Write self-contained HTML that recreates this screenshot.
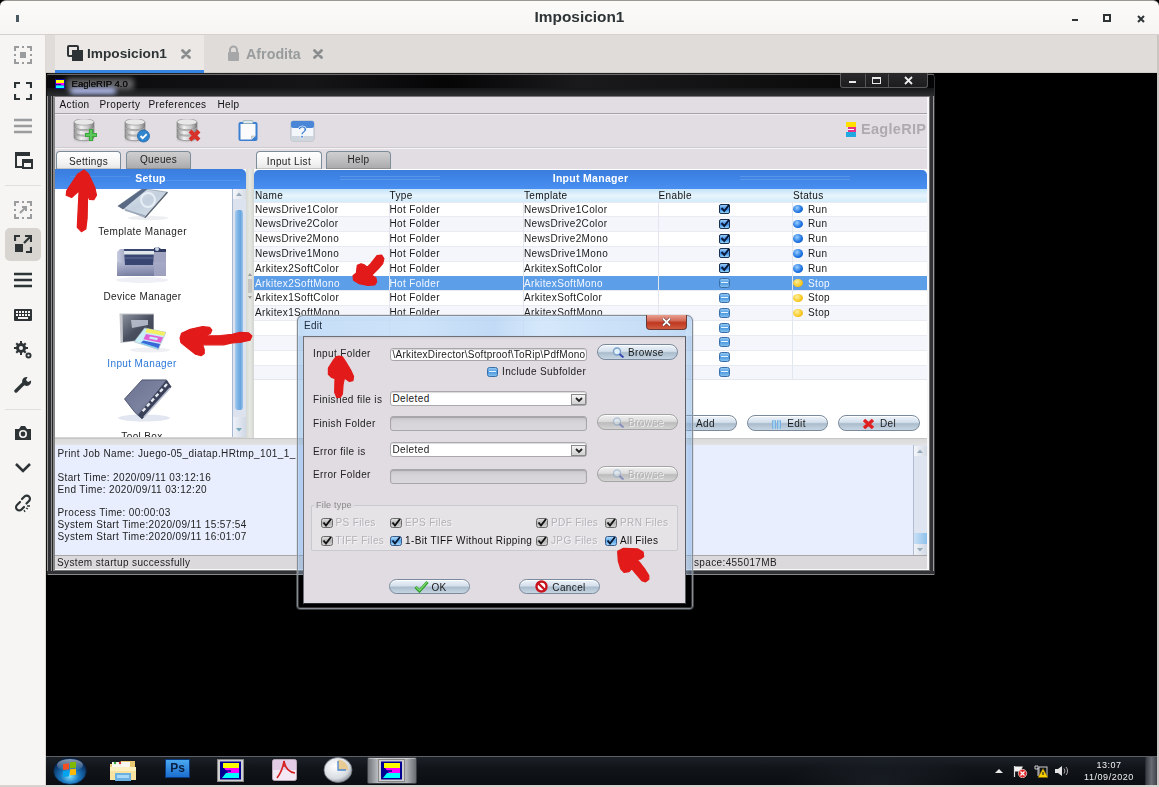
<!DOCTYPE html>
<html><head><meta charset="utf-8">
<style>
*{box-sizing:border-box;margin:0;padding:0}
html,body{width:1159px;height:787px;overflow:hidden;background:#000;font-family:"Liberation Sans",sans-serif;}
.a{position:absolute}
#titlebar{left:0;top:0;width:1159px;height:35px;background:linear-gradient(#fbfbfa,#f6f5f3);border-top:1px solid #9c9893;border-bottom:1px solid #d6d1cc;border-radius:6px 6px 0 0}
#sidebar{left:0;top:35px;width:46px;height:752px;background:#f6f5f4;border-right:1px solid #dcd8d4}
#tabbar{left:46px;top:35px;width:1111px;height:38px;background:#e0dcd9;border-bottom:1px solid #d0ccc8}
#rightedge{left:1157px;top:35px;width:2px;height:752px;background:#c9c5c1}
#bottomedge{left:0;top:785px;width:1159px;height:2px;background:#d6d2ce}
.sico{position:absolute;left:13px;width:20px;height:20px}
.t{position:absolute;white-space:nowrap;font-size:10px;letter-spacing:0.37px;color:#111;line-height:12px}
</style></head><body>

<!-- desktop chrome -->
<div id="titlebar" class="a">
  <div class="a" style="left:0;top:0;width:1159px;text-align:center;top:7.2px;font-weight:bold;font-size:15.4px;color:#2e3436;letter-spacing:0">Imposicion1</div>
  <div class="a" style="left:16px;top:14px;width:3px;height:7px;background:#4a5a60"></div>
  <div class="a" style="left:1072px;top:18px;width:6px;height:2px;background:#2e3436"></div>
  <svg class="a" style="left:1103px;top:13px" width="8" height="8"><rect x="1" y="1" width="6" height="6" fill="none" stroke="#2e3436" stroke-width="2"/></svg>
  <svg class="a" style="left:1137px;top:14px" width="8" height="8"><path d="M1 1L7 7M7 1L1 7" stroke="#2e3436" stroke-width="2"/></svg>
</div>
<div id="sidebar" class="a"></div>
<div id="tabbar" class="a">
  <div class="a" style="left:9px;top:0;width:149px;height:38px;background:#ebe8e5"></div>
  <div class="a" style="left:9px;top:35px;width:149px;height:3px;background:#3584e4"></div>
  <svg class="a" style="left:21px;top:10px" width="17" height="17"><rect x="1" y="1" width="10" height="10" rx="1" fill="none" stroke="#2e3436" stroke-width="2"/><rect x="5" y="5" width="11" height="11" fill="#2e3436"/></svg>
  <div class="a" style="left:41px;top:11px;font-weight:bold;font-size:13.7px;color:#2e3436">Imposicion1</div>
  <svg class="a" style="left:135px;top:14px" width="10" height="10"><path d="M1.5 1.5L8.5 8.5M8.5 1.5L1.5 8.5" stroke="#8a8d8e" stroke-width="2.8" stroke-linecap="round"/></svg>
  <svg class="a" style="left:181px;top:10px" width="13" height="16"><path d="M3 7V5a3.5 3.5 0 0 1 7 0v2" fill="none" stroke="#a5a7a8" stroke-width="2"/><rect x="1" y="7" width="11" height="9" rx="1" fill="#a5a7a8"/></svg>
  <div class="a" style="left:200px;top:10.6px;font-weight:bold;font-size:14.3px;color:#999c9d">Afrodita</div>
  <svg class="a" style="left:267px;top:14px" width="10" height="10"><path d="M1.5 1.5L8.5 8.5M8.5 1.5L1.5 8.5" stroke="#8a8d8e" stroke-width="2.8" stroke-linecap="round"/></svg>
</div>
<div id="rightedge" class="a"></div>
<div id="bottomedge" class="a"></div>

<!-- SIDEBAR ICONS -->
<div id="sideicons">
 <svg class="a" style="left:14px;top:46px" width="18" height="18"><g fill="none" stroke="#9a9c9d" stroke-width="2"><path d="M1 5V1h4M13 1h4v4M17 13v4h-4M5 17H1v-4"/></g><rect x="6" y="6" width="6" height="6" fill="#9a9c9d"/><path d="M8 1h2M8 17h2M1 8v2M17 8v2" stroke="#9a9c9d" stroke-width="2"/></svg>
 <svg class="a" style="left:14px;top:82px" width="18" height="18"><g fill="none" stroke="#2e3436" stroke-width="2.2"><path d="M1 6V1h5M12 1h5v5M17 12v5h-5M6 17H1v-5"/></g></svg>
 <svg class="a" style="left:13px;top:118px" width="20" height="16"><g stroke="#9a9c9d" stroke-width="2.4"><path d="M1 2h18M1 8h18M1 14h18"/></g></svg>
 <svg class="a" style="left:14px;top:151px" width="19" height="18"><path d="M1 1h15v2H3v12h5v2H1z" fill="#2e3436"/><rect x="1" y="1" width="15" height="4" fill="#2e3436"/><rect x="9" y="9" width="9" height="8" fill="none" stroke="#2e3436" stroke-width="2"/><rect x="9" y="9" width="9" height="3" fill="#2e3436"/></svg>
 <div class="a" style="left:5px;top:185px;width:36px;height:1px;background:#e2dfdb"></div>
 <svg class="a" style="left:14px;top:201px" width="18" height="18"><g fill="none" stroke="#9a9c9d" stroke-width="2"><path d="M1 5V1h4M13 1h4v4M17 13v4h-4M5 17H1v-4"/><path d="M6 12l6-6M8 6h4v4" /></g><path d="M8 1h2M8 17h2M1 8v2M17 8v2" stroke="#9a9c9d" stroke-width="2"/></svg>
 <div class="a" style="left:5px;top:228px;width:36px;height:33px;background:#d8d4d0;border-radius:5px"></div>
 <svg class="a" style="left:14px;top:235px" width="18" height="18"><g fill="none" stroke="#2e3436" stroke-width="2.2"><path d="M1 6V1h5M17 12v5h-5"/><path d="M10 8l6-6M11 1h6v6"/></g><rect x="1" y="9" width="8" height="8" fill="#2e3436"/></svg>
 <svg class="a" style="left:13px;top:272px" width="20" height="16"><g stroke="#2e3436" stroke-width="2.4"><path d="M1 2h18M1 8h18M1 14h18"/></g></svg>
 <svg class="a" style="left:14px;top:309px" width="18" height="12"><rect x="0" y="0" width="18" height="12" rx="1" fill="#2e3436"/><g fill="#f6f5f4"><rect x="2" y="2" width="2" height="2"/><rect x="5" y="2" width="2" height="2"/><rect x="8" y="2" width="2" height="2"/><rect x="11" y="2" width="2" height="2"/><rect x="14" y="2" width="2" height="2"/><rect x="2" y="5" width="2" height="2"/><rect x="5" y="5" width="2" height="2"/><rect x="8" y="5" width="2" height="2"/><rect x="11" y="5" width="2" height="2"/><rect x="14" y="5" width="2" height="2"/><rect x="4" y="8" width="10" height="2"/></g></svg>
 <svg class="a" style="left:14px;top:341px" width="18" height="18"><g fill="#2e3436"><circle cx="7" cy="7" r="5"/><path d="M6 0h2v3H6zM6 11h2v3H6zM0 6h3v2H0zM11 6h3v2h-3zM1.5 3L3 1.5 5 3.5 3.5 5zM9 10.5l1.5-1.5 2 2-1.5 1.5zM1.5 11l2-2 1.5 1.5-2 2zM9 3.5l2-2 1.5 1.5-2 2z"/><circle cx="14.5" cy="14.5" r="3"/></g><circle cx="7" cy="7" r="2" fill="#f6f5f4"/><circle cx="14.5" cy="14.5" r="1.1" fill="#f6f5f4"/></svg>
 <svg class="a" style="left:14px;top:376px" width="18" height="18"><path d="M2 15l7-7" stroke="#2e3436" stroke-width="3.4" stroke-linecap="round"/><path d="M13.5 1a4.5 4.5 0 1 0 3.5 3.5l-3 1.5-2-2 1.5-3z" fill="#2e3436"/></svg>
 <div class="a" style="left:5px;top:409px;width:36px;height:1px;background:#e2dfdb"></div>
 <svg class="a" style="left:14px;top:425px" width="18" height="16"><path d="M1 4h4l2-3h4l2 3h4v11H1z" fill="#2e3436"/><circle cx="9" cy="9" r="4" fill="#f6f5f4"/><circle cx="9" cy="9" r="2.4" fill="#2e3436"/></svg>
 <svg class="a" style="left:14px;top:462px" width="18" height="12"><path d="M2 2l7 7 7-7" fill="none" stroke="#2e3436" stroke-width="2.6"/></svg>
 <svg class="a" style="left:14px;top:494px" width="18" height="19"><g fill="none" stroke="#2e3436" stroke-width="2.2" stroke-linecap="round"><path d="M8 5l2.5-2.5a3 3 0 0 1 4.5 4.5L12.5 9.5"/><path d="M6 8L3 11a3 3 0 0 0 4.5 4.5L10 13"/></g><path d="M12 14l2 1M13 12l3 0M10 16l1 2" stroke="#2e3436" stroke-width="1.3"/></svg>
</div>

<!-- TASKBAR -->
<div class="a" style="left:46px;top:756px;width:1111px;height:29px;background:linear-gradient(#1c2128 0,#11151a 40%,#0a0d11 100%);border-top:1px solid #5e6268"></div>
<div class="a" style="left:780px;top:757px;width:200px;height:28px;background:radial-gradient(ellipse at 50% 100%,rgba(60,70,80,.25),transparent 70%)"></div>
<svg class="a" style="left:52px;top:757px" width="36" height="28" viewBox="0 0 36 28"><defs><radialGradient id="orb" cx="50%" cy="70%" r="60%"><stop offset="0" stop-color="#7fe0ff"/><stop offset=".45" stop-color="#1a78c0"/><stop offset="1" stop-color="#0a2a58"/></radialGradient><linearGradient id="orbh" x1="0" y1="0" x2="0" y2="1"><stop offset="0" stop-color="#fff" stop-opacity=".55"/><stop offset="1" stop-color="#fff" stop-opacity="0"/></linearGradient></defs><ellipse cx="18" cy="14" rx="16.5" ry="13.5" fill="url(#orb)" stroke="#0a1a30" stroke-width=".8"/><ellipse cx="18" cy="8" rx="13" ry="6" fill="url(#orbh)"/><g transform="translate(11,6) skewY(-6)"><rect x="0" y="1" width="6" height="6" fill="#f25022"/><rect x="7" y="0" width="6" height="6" fill="#7fba00"/><rect x="0" y="8" width="6" height="6" fill="#00a4ef"/><rect x="7" y="7" width="6" height="6" fill="#ffb900"/></g></svg>
<svg class="a" style="left:108px;top:759px" width="30" height="24"><path d="M2 5h9l2-3h14v19H2z" fill="#e8c870"/><rect x="4" y="3" width="18" height="6" fill="#f8f8f0"/><circle cx="7" cy="4" r="1.2" fill="#3a3"/><circle cx="12" cy="4" r="1.2" fill="#c33"/><path d="M2 8h26v13H2z" fill="#f8e4a0"/><path d="M2 8h26v4H2z" fill="#fcf0c0"/><path d="M7 14h16v8H7z" fill="#6ab0e0"/><path d="M9 16h12v3H9z" fill="#a8d8f8"/></svg>
<div class="a" style="left:165px;top:759px;width:25px;height:19px;background:linear-gradient(#4aa8f0,#1c6ed0);border:1px solid #0a3a80"></div>
<div class="a" style="left:165px;top:761px;width:25px;text-align:center;font-weight:bold;font-size:12px;color:#0a2040;line-height:14px">Ps</div>
<svg class="a" style="left:217px;top:759px" width="27" height="23"><rect x=".5" y=".5" width="26" height="22" fill="#d0d0d0" stroke="#888"/><rect x="3" y="2.5" width="21" height="18" fill="#000090"/><rect x="6" y="4" width="16" height="5" fill="#ffff00"/><path d="M7 9h15v5H11z" fill="#ff00ff"/><path d="M5 19l4-5h13v5z" fill="#00ffff"/><path d="M4 12h10" stroke="#000090" stroke-width="1.5"/></svg>
<svg class="a" style="left:272px;top:759px" width="25" height="22"><rect x=".5" y=".5" width="24" height="21" rx="2" fill="#f4e8f4" stroke="#b8a8b8"/><rect x="1" y="1" width="23" height="10" fill="#dcc0e0" opacity=".7"/><path d="M5 19c3-4 6-10 7-17 1 6 4 11 11 12" fill="none" stroke="#d42020" stroke-width="1.6"/><path d="M12 2v6" stroke="#d42020" stroke-width="1.4"/></svg>
<svg class="a" style="left:323px;top:757px" width="30" height="26"><defs><radialGradient id="clk" cx="40%" cy="35%" r="70%"><stop offset="0" stop-color="#ffffff"/><stop offset=".7" stop-color="#d8dde2"/><stop offset="1" stop-color="#8a9098"/></radialGradient></defs><ellipse cx="15" cy="13" rx="14" ry="12.5" fill="url(#clk)" stroke="#6a7078" stroke-width=".8"/><path d="M15 13V2.5A11 10.5 0 0 1 25.5 13z" fill="#e8c888" opacity=".9"/><path d="M15 4v9h8" fill="none" stroke="#4a88d0" stroke-width="1.3"/></svg>
<div class="a" style="left:367px;top:757px;width:50px;height:27px;border-radius:2px;background:linear-gradient(90deg,#707478 0,#b8bcc0 20%,#9ca0a4 50%,#b0b4b8 80%,#6a6e72 100%);border:1px solid #3a3e42;box-shadow:inset 0 1px 0 rgba(255,255,255,.4)"></div>
<svg class="a" style="left:378px;top:759px" width="27" height="23"><rect x=".5" y=".5" width="26" height="22" fill="#d0d0d0" stroke="#888"/><rect x="3" y="2.5" width="21" height="18" fill="#000090"/><rect x="6" y="4" width="16" height="5" fill="#ffff00"/><path d="M7 9h15v5H11z" fill="#ff00ff"/><path d="M5 19l4-5h13v5z" fill="#00ffff"/><path d="M4 12h10" stroke="#000090" stroke-width="1.5"/></svg>
<svg class="a" style="left:995px;top:768px" width="8" height="5"><path d="M0 5l4-4 4 4z" fill="#e8e8e8"/></svg>
<svg class="a" style="left:1013px;top:765px" width="15" height="13"><path d="M1.5 1v11" stroke="#ddd" stroke-width="1.2"/><path d="M2 1.5h8l-1.5 2.5L10 6.5H2z" fill="#f4f4f4"/><circle cx="9.5" cy="8.5" r="4.2" fill="#e02828" stroke="#fff" stroke-width=".6"/><path d="M7.5 6.5l4 4M11.5 6.5l-4 4" stroke="#fff" stroke-width="1.2"/></svg>
<svg class="a" style="left:1034px;top:765px" width="14" height="13"><path d="M1 1h3v3H1zM4 3v8" stroke="#ccc" fill="none" stroke-width="1"/><rect x="5" y="2" width="8" height="9" fill="none" stroke="#ccc" stroke-width="1"/><path d="M4 12.5l5-9 5 9z" fill="#f8d000" stroke="#806000" stroke-width=".6"/><path d="M9 7v3" stroke="#222" stroke-width="1.2"/></svg>
<svg class="a" style="left:1054px;top:765px" width="14" height="12"><path d="M1 4h3l4-3v10L4 8H1z" fill="#e4e4e4"/><path d="M10 3.5a4 4 0 0 1 0 5M12 2a6 6 0 0 1 0 8" fill="none" stroke="#aaa" stroke-width="1"/></svg>
<div class="a" style="left:1080px;top:759.5px;width:58px;text-align:center;font-size:9px;letter-spacing:0.5px;color:#f0f0f0;line-height:11px">13:07</div>
<div class="a" style="left:1080px;top:772px;width:58px;text-align:center;font-size:9px;letter-spacing:0.55px;color:#f0f0f0;line-height:11px">11/09/2020</div>
<div class="a" style="left:1145px;top:757px;width:12px;height:28px;background:linear-gradient(90deg,#3a3e44,#6a6e74 50%,#3e4248);border-left:1px solid #2a2e34"></div>
<!-- EAGLERIP WINDOW -->
<div class="a" style="left:46px;top:73px;width:889px;height:502px;background:#303236;border-radius:5px 5px 0 0;box-shadow:inset 1px 0 0 #111,inset 0 1px 0 #222"></div>
<div class="a" style="left:47px;top:96px;width:1px;height:475px;background:#9a9a9a"></div>
<div class="a" style="left:51px;top:96px;width:1px;height:475px;background:#8e8e8e"></div>
<div class="a" style="left:52px;top:96px;width:1px;height:475px;background:#262626"></div>
<div class="a" style="left:53px;top:96px;width:2px;height:475px;background:#858585"></div>
<div class="a" style="left:929px;top:96px;width:1px;height:475px;background:#777"></div>
<div class="a" style="left:933px;top:80px;width:1px;height:491px;background:#9a9a9a"></div>
<div class="a" style="left:55px;top:570px;width:874px;height:1px;background:#777"></div>
<div class="a" style="left:48px;top:574px;width:886px;height:1px;background:#8a8a8a"></div>
<div class="a" style="left:47px;top:74px;width:887px;height:22px;background:linear-gradient(90deg,#0a0a0c 0,#151517 30%,#050506 45%,#1a1a1c 60%,#050505 100%);border-radius:4px 4px 0 0"></div>
<div class="a" style="left:47px;top:74px;width:887px;height:1px;background:#6a6a6a"></div>
<div class="a" style="left:47px;top:88px;width:887px;height:8px;background:linear-gradient(#151618,#2c2e30)"></div>
<div class="a" style="left:66px;top:78px;width:68px;height:12px;background:#5e5e60;filter:blur(2.5px);border-radius:4px"></div>
<div class="a" style="left:70px;top:88px;width:46px;height:6px;background:#b8c4f8;filter:blur(2.5px);border-radius:3px"></div>
<svg class="a" style="left:55px;top:79px" width="10" height="10"><rect width="10" height="10" fill="#1010a0"/><rect x="1" y="1" width="8" height="3" fill="#ffff00"/><rect x="1" y="4" width="8" height="2.5" fill="#ff00ff"/><rect x="1" y="6.5" width="8" height="2.5" fill="#00ffff"/><path d="M1 5.5h5" stroke="#1010a0" stroke-width="1"/></svg>
<div class="a t" style="left:71.5px;top:77.5px;color:#111;font-size:9.6px;letter-spacing:0px;text-shadow:0 0 .6px #000">EagleRIP 4.0</div>
<div class="a" style="left:840px;top:73px;width:88px;height:15px;border:1px solid #5a5a5a;border-top:none;border-radius:0 0 3px 3px;background:linear-gradient(#2a2a2c,#1c1c1e)"></div>
<div class="a" style="left:865px;top:74px;width:1px;height:13px;background:#555"></div>
<div class="a" style="left:888px;top:74px;width:1px;height:13px;background:#555"></div>
<div class="a" style="left:849px;top:81px;width:7px;height:2px;background:#e8e8e8"></div>
<div class="a" style="left:872px;top:77px;width:9px;height:7px;border:1.5px solid #e8e8e8;border-top-width:2px"></div>
<svg class="a" style="left:904px;top:76px" width="9" height="9"><path d="M1 1L8 8M8 1L1 8" stroke="#eee" stroke-width="1.8"/></svg>
<div class="a" style="left:55px;top:96px;width:874px;height:474px;background:#e1dde2;border-top:1px solid #7a767a"></div>
<div class="a" style="left:927px;top:97px;width:2px;height:473px;background:#f7f6f8"></div>
<div class="a t" style="left:59.5px;top:99px">Action</div>
<div class="a t" style="left:99.5px;top:99px">Property</div>
<div class="a t" style="left:148.5px;top:99px">Preferences</div>
<div class="a t" style="left:217.5px;top:99px">Help</div>
<div class="a" style="left:55px;top:113px;width:872px;height:1px;background:#a6a2a6"></div>
<div class="a" style="left:55px;top:114px;width:872px;height:1px;background:#f0eef1"></div>
<svg class="a" style="left:72px;top:119px" width="28" height="24" viewBox="0 0 28 24"><defs><linearGradient id="dbg" x1="0" x2="1"><stop offset="0" stop-color="#8d8d8d"/><stop offset=".35" stop-color="#f2f2f2"/><stop offset=".7" stop-color="#c8c8c8"/><stop offset="1" stop-color="#7a7a7a"/></linearGradient></defs><ellipse cx="12" cy="21" rx="11" ry="2.5" fill="#cfcbd0" opacity=".7"/><path d="M2 14v4.5a10 3.2 0 0 0 20 0V14" fill="url(#dbg)" stroke="#777" stroke-width=".6"/><ellipse cx="12" cy="14" rx="10" ry="3.2" fill="#e8e8e8" stroke="#8a8a8a" stroke-width=".6"/><path d="M2 8.5v4.5a10 3.2 0 0 0 20 0V8.5" fill="url(#dbg)" stroke="#777" stroke-width=".6"/><ellipse cx="12" cy="8.5" rx="10" ry="3.2" fill="#e8e8e8" stroke="#8a8a8a" stroke-width=".6"/><path d="M2 3v4.5a10 3.2 0 0 0 20 0V3" fill="url(#dbg)" stroke="#777" stroke-width=".6"/><ellipse cx="12" cy="3" rx="10" ry="3.2" fill="#e8e8e8" stroke="#8a8a8a" stroke-width=".6"/><path d="M19 10v12M13 16h12" stroke="#3aa83a" stroke-width="4.2"/><path d="M19 11v10M14 16h10" stroke="#5cc85c" stroke-width="2"/></svg>
<svg class="a" style="left:123px;top:119px" width="28" height="24" viewBox="0 0 28 24"><defs><linearGradient id="dbg" x1="0" x2="1"><stop offset="0" stop-color="#8d8d8d"/><stop offset=".35" stop-color="#f2f2f2"/><stop offset=".7" stop-color="#c8c8c8"/><stop offset="1" stop-color="#7a7a7a"/></linearGradient></defs><ellipse cx="12" cy="21" rx="11" ry="2.5" fill="#cfcbd0" opacity=".7"/><path d="M2 14v4.5a10 3.2 0 0 0 20 0V14" fill="url(#dbg)" stroke="#777" stroke-width=".6"/><ellipse cx="12" cy="14" rx="10" ry="3.2" fill="#e8e8e8" stroke="#8a8a8a" stroke-width=".6"/><path d="M2 8.5v4.5a10 3.2 0 0 0 20 0V8.5" fill="url(#dbg)" stroke="#777" stroke-width=".6"/><ellipse cx="12" cy="8.5" rx="10" ry="3.2" fill="#e8e8e8" stroke="#8a8a8a" stroke-width=".6"/><path d="M2 3v4.5a10 3.2 0 0 0 20 0V3" fill="url(#dbg)" stroke="#777" stroke-width=".6"/><ellipse cx="12" cy="3" rx="10" ry="3.2" fill="#e8e8e8" stroke="#8a8a8a" stroke-width=".6"/><circle cx="20.5" cy="17" r="6" fill="#2f86cf" stroke="#1e63a8" stroke-width=".8"/><path d="M17.5 17l2.2 2.2 4-4" fill="none" stroke="#fff" stroke-width="1.8"/></svg>
<svg class="a" style="left:175px;top:119px" width="28" height="24" viewBox="0 0 28 24"><defs><linearGradient id="dbg" x1="0" x2="1"><stop offset="0" stop-color="#8d8d8d"/><stop offset=".35" stop-color="#f2f2f2"/><stop offset=".7" stop-color="#c8c8c8"/><stop offset="1" stop-color="#7a7a7a"/></linearGradient></defs><ellipse cx="12" cy="21" rx="11" ry="2.5" fill="#cfcbd0" opacity=".7"/><path d="M2 14v4.5a10 3.2 0 0 0 20 0V14" fill="url(#dbg)" stroke="#777" stroke-width=".6"/><ellipse cx="12" cy="14" rx="10" ry="3.2" fill="#e8e8e8" stroke="#8a8a8a" stroke-width=".6"/><path d="M2 8.5v4.5a10 3.2 0 0 0 20 0V8.5" fill="url(#dbg)" stroke="#777" stroke-width=".6"/><ellipse cx="12" cy="8.5" rx="10" ry="3.2" fill="#e8e8e8" stroke="#8a8a8a" stroke-width=".6"/><path d="M2 3v4.5a10 3.2 0 0 0 20 0V3" fill="url(#dbg)" stroke="#777" stroke-width=".6"/><ellipse cx="12" cy="3" rx="10" ry="3.2" fill="#e8e8e8" stroke="#8a8a8a" stroke-width=".6"/><path d="M15 12l9 9M24 12l-9 9" stroke="#d8332a" stroke-width="4"/></svg>
<svg class="a" style="left:237px;top:120px" width="22" height="23"><rect x="1.5" y="2" width="19" height="19" rx="2" fill="#3c7fd0"/><path d="M3.5 4h15v12l-4 3.5h-11z" fill="#fbfbfb"/><path d="M14.5 19.5v-3.5h4" fill="#d8d8d8" stroke="#9aa" stroke-width=".5"/><rect x="6" y="0.5" width="10" height="3" rx="1" fill="#dfe7ee" stroke="#8aa" stroke-width=".6"/></svg>
<svg class="a" style="left:290px;top:120px" width="25" height="23"><rect x="1" y="1" width="23" height="20" rx="2" fill="#f3f6fa" stroke="#a5b0bb" stroke-width=".8"/><rect x="1" y="1" width="23" height="7" rx="2" fill="#4a86d8"/><path d="M1 16h23v3a2 2 0 0 1-2 2H3a2 2 0 0 1-2-2z" fill="#cfd5dc"/><text x="12.5" y="18" text-anchor="middle" font-family="Liberation Sans" font-weight="bold" font-size="16" fill="#3a7bd5" stroke="#fff" stroke-width=".6">?</text></svg>
<svg class="a" style="left:845px;top:122px" width="12" height="16"><rect x="1" y="0" width="10" height="5" fill="#ffe000"/><rect x="3" y="5" width="8" height="5" fill="#e8308a"/><rect x="1" y="10" width="10" height="5" fill="#20a8e0"/><path d="M3 7.5h6" stroke="#fff" stroke-width="1"/></svg>
<div class="a" style="left:861px;top:121px;font-size:14.5px;font-weight:bold;color:#adabae;letter-spacing:0.3px;line-height:17px">EagleRIP</div>
<div class="a" style="left:55px;top:147px;width:872px;height:1px;background:#cfccd0"></div>
<div class="a" style="left:55px;top:148px;width:872px;height:1px;background:#f4f3f5"></div>
<div class="a" style="left:56px;top:151px;width:65px;height:18px;background:linear-gradient(#ffffff,#f4f4f4 60%,#e6e6e6);border:1px solid #7d8c99;border-bottom:none;border-radius:4px 4px 0 0;box-shadow:inset 0 -1px 0 rgba(0,0,0,.15)"></div><div class="a t" style="left:56px;top:155.5px;width:65px;text-align:center;color:#222">Settings</div>
<div class="a" style="left:126px;top:151px;width:65px;height:18px;background:linear-gradient(#cfcfd0,#b9b9bb 60%,#a9a9ab);border:1px solid #7d8c99;border-bottom:none;border-radius:4px 4px 0 0;box-shadow:inset 0 -1px 0 rgba(0,0,0,.15)"></div><div class="a t" style="left:126px;top:154px;width:65px;text-align:center;color:#222">Queues</div>
<div class="a" style="left:256px;top:151px;width:66px;height:18px;background:linear-gradient(#ffffff,#f4f4f4 60%,#e6e6e6);border:1px solid #7d8c99;border-bottom:none;border-radius:4px 4px 0 0;box-shadow:inset 0 -1px 0 rgba(0,0,0,.15)"></div><div class="a t" style="left:256px;top:155.5px;width:66px;text-align:center;color:#222">Input List</div>
<div class="a" style="left:326px;top:151px;width:65px;height:18px;background:linear-gradient(#cfcfd0,#b9b9bb 60%,#a9a9ab);border:1px solid #7d8c99;border-bottom:none;border-radius:4px 4px 0 0;box-shadow:inset 0 -1px 0 rgba(0,0,0,.15)"></div><div class="a t" style="left:326px;top:154px;width:65px;text-align:center;color:#222">Help</div>
<div class="a" style="left:55px;top:169px;width:191px;height:269px;background:#fff"></div>
<div class="a" style="left:55px;top:169px;width:191px;height:20px;background:linear-gradient(#3a7ddd,#3f86e8 50%,#4a8ff0);border-radius:0 5px 0 0"></div>
<div class="a" style="left:70px;top:176px;width:60px;height:1px;background:rgba(255,255,255,.1)"></div>
<div class="a" style="left:160px;top:180px;width:80px;height:1px;background:rgba(255,255,255,.1)"></div>
<div class="a t" style="left:55px;top:172px;width:191px;text-align:center;color:#fff;font-weight:bold;font-size:10.5px;letter-spacing:0.3px">Setup</div>
<div class="a" style="left:232px;top:189px;width:14px;height:249px;background:#dde3ee;border-left:1px solid #a8b8d0"></div>
<div class="a" style="left:233px;top:189px;width:13px;height:10px;background:linear-gradient(90deg,#f4f6fa,#d8dde6)"></div>
<svg class="a" style="left:235px;top:191px" width="8" height="6"><path d="M1 5l3-3.5L7 5" fill="#9ab" /></svg>
<div class="a" style="left:235px;top:210px;width:8px;height:200px;background:linear-gradient(90deg,#a9cdef,#78b1e6 40%,#6aa6de 70%,#9cc4ea);border-radius:3px"></div>
<div class="a" style="left:233px;top:417px;width:13px;height:21px;background:linear-gradient(90deg,#eef1f8,#d0d8e6)"></div>
<svg class="a" style="left:235px;top:427px" width="8" height="6"><path d="M1 1l3 3.5L7 1" fill="#7ab" /></svg>
<div class="a" style="left:246px;top:169px;width:8px;height:269px;background:linear-gradient(90deg,#d6d8d4,#e6e8e4 50%,#d2d4d0)"></div>
<svg class="a" style="left:247px;top:270px" width="6" height="32"><path d="M1 6l2-3 2 3M1 26l2 3 2-3" fill="#999"/><path d="M2 9v14M4 9v14" stroke="#9a9a9a" stroke-width=".8"/></svg>
<svg class="a" style="left:110px;top:189px" width="62" height="33" viewBox="0 4 62 33"><defs><linearGradient id="tmg" x1="0" y1="0" x2="1" y2="1"><stop offset="0" stop-color="#e4ecf4"/><stop offset=".5" stop-color="#c4d0de"/><stop offset="1" stop-color="#d8e2ec"/></linearGradient></defs><ellipse cx="38" cy="33" rx="20" ry="2.2" fill="#eceef2"/><path d="M7.9 21.1L32.6 3.6 57.4 7.2 35 32.6z" fill="url(#tmg)" stroke="#8a96a6" stroke-width=".7"/><path d="M7.9 21.1L32.6 3.6 37.5 4 13 24.5z" fill="#5a6a84"/><path d="M57.4 7.2L35 32.6" stroke="#5a626e" stroke-width="1.4"/><circle cx="38" cy="15" r="7" fill="none" stroke="#eef4fa" stroke-width="2" opacity=".8"/><path d="M15 25l20 6" stroke="#9aa8ba" stroke-width="1.5"/></svg>
<div class="a t" style="left:82.5px;top:226px;width:120px;text-align:center;color:#222">Template Manager</div>
<svg class="a" style="left:110px;top:240px" width="62" height="46" viewBox="0 0 62 46"><defs><linearGradient id="prg" x1="0" y1="0" x2="0" y2="1"><stop offset="0" stop-color="#b4b8d0"/><stop offset=".5" stop-color="#9298b8"/><stop offset="1" stop-color="#6e7498"/></linearGradient><linearGradient id="prg2" x1="0" y1="0" x2="1" y2="0"><stop offset="0" stop-color="#c8cce0"/><stop offset=".2" stop-color="#9ea4c0"/><stop offset="1" stop-color="#8a90b0"/></linearGradient></defs><ellipse cx="32" cy="40" rx="26" ry="3" fill="#eef0f6"/><path d="M7 12l3-3h44l2 3v24H7z" fill="url(#prg2)"/><path d="M7 22h49v14H7z" fill="url(#prg)" opacity=".8"/><path d="M14 9h30l-1 16H15z" fill="#3a4672"/><path d="M14 11h30v3.5H14z" fill="#dfe6ea"/><path d="M15 18h28" stroke="#5a6a98" stroke-width="1.2"/><path d="M44 9h12v27H44z" fill="#a4a8c4" opacity=".85"/><path d="M44 8l4-1 3 2 5 0v3H44z" fill="#2e3a60"/><circle cx="47" cy="9" r="2" fill="#c8d4e8"/></svg>
<div class="a t" style="left:82.5px;top:291px;width:120px;text-align:center;color:#222">Device Manager</div>
<svg class="a" style="left:110px;top:305px" width="65" height="50" viewBox="0 0 65 50"><defs><linearGradient id="mng" x1="0" y1="0" x2="1" y2="1"><stop offset="0" stop-color="#8a909c"/><stop offset=".5" stop-color="#4a5060"/><stop offset="1" stop-color="#3a4050"/></linearGradient></defs><ellipse cx="40" cy="45" rx="20" ry="2.5" fill="#eef0f4"/><path d="M9.5 8.5h34.5v25.5L10.5 38z" fill="#c4c6cc"/><path d="M12.5 9.5h31v24L13 37z" fill="url(#mng)"/><path d="M21 15l17 0 0 5-16 3z" fill="#c0c6d4" opacity=".85"/><path d="M34.6 22.9l21.3 4.4-7.6 17.2-24.2-7.7z" fill="#c8eef8" stroke="#a8b4c0" stroke-width=".6"/><path d="M37 23.4l18.5 3.8-1.6 3.6-18.6-3.6z" fill="#f4f060"/><path d="M36 29l17 3.3-2.4 5.5-17.2-3.6z" fill="#e060d8"/><path d="M40 31.5l8 1.5-1 2.2-8-1.6z" fill="#c8eef8"/><path d="M33.4 35.6l16.8 3.5-1.9 4.3-17.8-5.5z" fill="#3a68d8"/><path d="M31 38l16 5" stroke="#7ad0f0" stroke-width="1.3"/></svg>
<div class="a t" style="left:82px;top:358px;width:120px;text-align:center;color:#2c78d8">Input Manager</div>
<svg class="a" style="left:110px;top:370px" width="66" height="56" viewBox="0 0 66 56"><defs><linearGradient id="tbg" x1="0" y1="0" x2="1" y2="1"><stop offset="0" stop-color="#6a7290"/><stop offset=".5" stop-color="#7a82a0"/><stop offset="1" stop-color="#4a5270"/></linearGradient></defs><ellipse cx="34" cy="48" rx="26" ry="3.5" fill="#e2e6f0"/><path d="M14.5 29L32 9.9h24.4L61 16.8 32 48.8 25.2 42.7z" fill="url(#tbg)" stroke="#3e4460" stroke-width=".8"/><path d="M56.4 9.9L61 16.8 32 48.8 28 45z" fill="#3a4058"/><path d="M57 14L31 43" stroke="#e4e8f0" stroke-width="2.4" stroke-dasharray="4 2.5"/><path d="M60 18L34 47" stroke="#b8bed0" stroke-width="1.5"/></svg>
<div class="a t" style="left:82px;top:431px;width:120px;text-align:center;color:#222">Tool Box</div>
<div class="a" style="left:55px;top:437px;width:191px;height:1px;background:#d6d6d6"></div>
<div class="a" style="left:254px;top:169px;width:673px;height:269px;background:#fff"></div>
<div class="a" style="left:254px;top:170px;width:673px;height:19px;background:linear-gradient(#3a7ddd,#3f86e8 50%,#4a8ff0);border-radius:5px 5px 0 0"></div>
<div class="a" style="left:340px;top:176px;width:100px;height:1px;background:rgba(255,255,255,.14)"></div>
<div class="a" style="left:340px;top:179px;width:100px;height:1px;background:rgba(255,255,255,.14)"></div>
<div class="a" style="left:740px;top:176px;width:110px;height:1px;background:rgba(255,255,255,.14)"></div>
<div class="a" style="left:740px;top:179px;width:110px;height:1px;background:rgba(255,255,255,.14)"></div>
<div class="a t" style="left:254px;top:172px;width:673px;text-align:center;color:#fff;font-weight:bold;font-size:10.5px;letter-spacing:0.3px">Input Manager</div>
<div class="a" style="left:254px;top:189px;width:673px;height:13px;background:linear-gradient(#c4e4f8,#e6f4fc 50%,#d4ecfa)"></div>
<div class="a t" style="left:255px;top:190px">Name</div>
<div class="a t" style="left:389.5px;top:190px">Type</div>
<div class="a t" style="left:524px;top:190px">Template</div>
<div class="a t" style="left:658.5px;top:190px">Enable</div>
<div class="a t" style="left:793px;top:190px">Status</div>
<div class="a" style="left:254px;top:201.50px;width:673px;height:14.83px;background:#ffffff;border-top:1px solid #e8ebf2"></div>
<div class="a t" style="left:255px;top:203.50px;color:#1a1a1a">NewsDrive1Color</div>
<div class="a t" style="left:389.5px;top:203.50px;color:#1a1a1a">Hot Folder</div>
<div class="a t" style="left:524px;top:203.50px;color:#1a1a1a">NewsDrive1Color</div>
<svg class="a" style="left:719px;top:204.00px" width="11" height="10"><defs><linearGradient id="cbc0" x1="0" y1="0" x2="0" y2="1"><stop offset="0" stop-color="#a8d4f8"/><stop offset=".55" stop-color="#3a8ae8"/><stop offset="1" stop-color="#a0e0fa"/></linearGradient></defs><rect x=".5" y=".5" width="10" height="9" rx="1.5" fill="url(#cbc0)" stroke="#1a3050" stroke-width="1"/><path d="M2.5 4l2.8 3 5-6.5" fill="none" stroke="#0a1a38" stroke-width="1.9"/></svg>
<div class="a" style="left:793px;top:204.80px;width:10px;height:8.5px;border-radius:50%;background:radial-gradient(circle at 40% 35%,#9ad0ff,#1a70e0 60%,#0a50b0)"></div>
<div class="a t" style="left:808px;top:203.50px;color:#1a1a1a">Run</div>
<div class="a" style="left:254px;top:216.33px;width:673px;height:14.83px;background:#f4f6fb;border-top:1px solid #e8ebf2"></div>
<div class="a t" style="left:255px;top:218.33px;color:#1a1a1a">NewsDrive2Color</div>
<div class="a t" style="left:389.5px;top:218.33px;color:#1a1a1a">Hot Folder</div>
<div class="a t" style="left:524px;top:218.33px;color:#1a1a1a">NewsDrive2Color</div>
<svg class="a" style="left:719px;top:218.83px" width="11" height="10"><defs><linearGradient id="cbc1" x1="0" y1="0" x2="0" y2="1"><stop offset="0" stop-color="#a8d4f8"/><stop offset=".55" stop-color="#3a8ae8"/><stop offset="1" stop-color="#a0e0fa"/></linearGradient></defs><rect x=".5" y=".5" width="10" height="9" rx="1.5" fill="url(#cbc1)" stroke="#1a3050" stroke-width="1"/><path d="M2.5 4l2.8 3 5-6.5" fill="none" stroke="#0a1a38" stroke-width="1.9"/></svg>
<div class="a" style="left:793px;top:219.63px;width:10px;height:8.5px;border-radius:50%;background:radial-gradient(circle at 40% 35%,#9ad0ff,#1a70e0 60%,#0a50b0)"></div>
<div class="a t" style="left:808px;top:218.33px;color:#1a1a1a">Run</div>
<div class="a" style="left:254px;top:231.16px;width:673px;height:14.83px;background:#ffffff;border-top:1px solid #e8ebf2"></div>
<div class="a t" style="left:255px;top:233.16px;color:#1a1a1a">NewsDrive2Mono</div>
<div class="a t" style="left:389.5px;top:233.16px;color:#1a1a1a">Hot Folder</div>
<div class="a t" style="left:524px;top:233.16px;color:#1a1a1a">NewsDrive2Mono</div>
<svg class="a" style="left:719px;top:233.66px" width="11" height="10"><defs><linearGradient id="cbc2" x1="0" y1="0" x2="0" y2="1"><stop offset="0" stop-color="#a8d4f8"/><stop offset=".55" stop-color="#3a8ae8"/><stop offset="1" stop-color="#a0e0fa"/></linearGradient></defs><rect x=".5" y=".5" width="10" height="9" rx="1.5" fill="url(#cbc2)" stroke="#1a3050" stroke-width="1"/><path d="M2.5 4l2.8 3 5-6.5" fill="none" stroke="#0a1a38" stroke-width="1.9"/></svg>
<div class="a" style="left:793px;top:234.46px;width:10px;height:8.5px;border-radius:50%;background:radial-gradient(circle at 40% 35%,#9ad0ff,#1a70e0 60%,#0a50b0)"></div>
<div class="a t" style="left:808px;top:233.16px;color:#1a1a1a">Run</div>
<div class="a" style="left:254px;top:245.99px;width:673px;height:14.83px;background:#f4f6fb;border-top:1px solid #e8ebf2"></div>
<div class="a t" style="left:255px;top:247.99px;color:#1a1a1a">NewsDrive1Mono</div>
<div class="a t" style="left:389.5px;top:247.99px;color:#1a1a1a">Hot Folder</div>
<div class="a t" style="left:524px;top:247.99px;color:#1a1a1a">NewsDrive1Mono</div>
<svg class="a" style="left:719px;top:248.49px" width="11" height="10"><defs><linearGradient id="cbc3" x1="0" y1="0" x2="0" y2="1"><stop offset="0" stop-color="#a8d4f8"/><stop offset=".55" stop-color="#3a8ae8"/><stop offset="1" stop-color="#a0e0fa"/></linearGradient></defs><rect x=".5" y=".5" width="10" height="9" rx="1.5" fill="url(#cbc3)" stroke="#1a3050" stroke-width="1"/><path d="M2.5 4l2.8 3 5-6.5" fill="none" stroke="#0a1a38" stroke-width="1.9"/></svg>
<div class="a" style="left:793px;top:249.29px;width:10px;height:8.5px;border-radius:50%;background:radial-gradient(circle at 40% 35%,#9ad0ff,#1a70e0 60%,#0a50b0)"></div>
<div class="a t" style="left:808px;top:247.99px;color:#1a1a1a">Run</div>
<div class="a" style="left:254px;top:260.82px;width:673px;height:14.83px;background:#ffffff;border-top:1px solid #e8ebf2"></div>
<div class="a t" style="left:255px;top:262.82px;color:#1a1a1a">Arkitex2SoftColor</div>
<div class="a t" style="left:389.5px;top:262.82px;color:#1a1a1a">Hot Folder</div>
<div class="a t" style="left:524px;top:262.82px;color:#1a1a1a">ArkitexSoftColor</div>
<svg class="a" style="left:719px;top:263.32px" width="11" height="10"><defs><linearGradient id="cbc4" x1="0" y1="0" x2="0" y2="1"><stop offset="0" stop-color="#a8d4f8"/><stop offset=".55" stop-color="#3a8ae8"/><stop offset="1" stop-color="#a0e0fa"/></linearGradient></defs><rect x=".5" y=".5" width="10" height="9" rx="1.5" fill="url(#cbc4)" stroke="#1a3050" stroke-width="1"/><path d="M2.5 4l2.8 3 5-6.5" fill="none" stroke="#0a1a38" stroke-width="1.9"/></svg>
<div class="a" style="left:793px;top:264.12px;width:10px;height:8.5px;border-radius:50%;background:radial-gradient(circle at 40% 35%,#9ad0ff,#1a70e0 60%,#0a50b0)"></div>
<div class="a t" style="left:808px;top:262.82px;color:#1a1a1a">Run</div>
<div class="a" style="left:254px;top:275.65px;width:673px;height:14.83px;background:#5c9ee8;border-top:1px solid #5c9ee8"></div>
<div class="a t" style="left:255px;top:277.65px;color:#f4f8ff">Arkitex2SoftMono</div>
<div class="a t" style="left:389.5px;top:277.65px;color:#f4f8ff">Hot Folder</div>
<div class="a t" style="left:524px;top:277.65px;color:#f4f8ff">ArkitexSoftMono</div>
<svg class="a" style="left:719px;top:278.15px" width="11" height="10"><defs><linearGradient id="cbu5" x1="0" y1="0" x2="0" y2="1"><stop offset="0" stop-color="#9cd0f8"/><stop offset=".5" stop-color="#4a98e0"/><stop offset="1" stop-color="#8ac4f0"/></linearGradient></defs><rect x=".5" y=".5" width="10" height="9" rx="2" fill="url(#cbu5)" stroke="#3a6ea8" stroke-width="1"/><path d="M2 4.5h7" stroke="#e8f4ff" stroke-width="1"/></svg>
<div class="a" style="left:793px;top:278.95px;width:10px;height:8.5px;border-radius:50%;background:radial-gradient(circle at 40% 35%,#fff0a0,#f8c820 60%,#e0a000)"></div>
<div class="a t" style="left:808px;top:277.65px;color:#f4f8ff">Stop</div>
<div class="a" style="left:254px;top:290.48px;width:673px;height:14.83px;background:#ffffff;border-top:1px solid #e8ebf2"></div>
<div class="a t" style="left:255px;top:292.48px;color:#1a1a1a">Arkitex1SoftColor</div>
<div class="a t" style="left:389.5px;top:292.48px;color:#1a1a1a">Hot Folder</div>
<div class="a t" style="left:524px;top:292.48px;color:#1a1a1a">ArkitexSoftColor</div>
<svg class="a" style="left:719px;top:292.98px" width="11" height="10"><defs><linearGradient id="cbu6" x1="0" y1="0" x2="0" y2="1"><stop offset="0" stop-color="#9cd0f8"/><stop offset=".5" stop-color="#4a98e0"/><stop offset="1" stop-color="#8ac4f0"/></linearGradient></defs><rect x=".5" y=".5" width="10" height="9" rx="2" fill="url(#cbu6)" stroke="#3a6ea8" stroke-width="1"/><path d="M2 4.5h7" stroke="#e8f4ff" stroke-width="1"/></svg>
<div class="a" style="left:793px;top:293.78px;width:10px;height:8.5px;border-radius:50%;background:radial-gradient(circle at 40% 35%,#fff0a0,#f8c820 60%,#e0a000)"></div>
<div class="a t" style="left:808px;top:292.48px;color:#1a1a1a">Stop</div>
<div class="a" style="left:254px;top:305.31px;width:673px;height:14.83px;background:#f4f6fb;border-top:1px solid #e8ebf2"></div>
<div class="a t" style="left:255px;top:307.31px;color:#1a1a1a">Arkitex1SoftMono</div>
<div class="a t" style="left:389.5px;top:307.31px;color:#1a1a1a">Hot Folder</div>
<div class="a t" style="left:524px;top:307.31px;color:#1a1a1a">ArkitexSoftMono</div>
<svg class="a" style="left:719px;top:307.81px" width="11" height="10"><defs><linearGradient id="cbu7" x1="0" y1="0" x2="0" y2="1"><stop offset="0" stop-color="#9cd0f8"/><stop offset=".5" stop-color="#4a98e0"/><stop offset="1" stop-color="#8ac4f0"/></linearGradient></defs><rect x=".5" y=".5" width="10" height="9" rx="2" fill="url(#cbu7)" stroke="#3a6ea8" stroke-width="1"/><path d="M2 4.5h7" stroke="#e8f4ff" stroke-width="1"/></svg>
<div class="a" style="left:793px;top:308.61px;width:10px;height:8.5px;border-radius:50%;background:radial-gradient(circle at 40% 35%,#fff0a0,#f8c820 60%,#e0a000)"></div>
<div class="a t" style="left:808px;top:307.31px;color:#1a1a1a">Stop</div>
<div class="a" style="left:254px;top:320.14px;width:673px;height:14.83px;background:#ffffff;border-top:1px solid #e8ebf2"></div>
<svg class="a" style="left:719px;top:322.64px" width="11" height="10"><defs><linearGradient id="cbu8" x1="0" y1="0" x2="0" y2="1"><stop offset="0" stop-color="#9cd0f8"/><stop offset=".5" stop-color="#4a98e0"/><stop offset="1" stop-color="#8ac4f0"/></linearGradient></defs><rect x=".5" y=".5" width="10" height="9" rx="2" fill="url(#cbu8)" stroke="#3a6ea8" stroke-width="1"/><path d="M2 4.5h7" stroke="#e8f4ff" stroke-width="1"/></svg>
<div class="a" style="left:254px;top:334.97px;width:673px;height:14.83px;background:#f4f6fb;border-top:1px solid #e8ebf2"></div>
<svg class="a" style="left:719px;top:337.47px" width="11" height="10"><defs><linearGradient id="cbu9" x1="0" y1="0" x2="0" y2="1"><stop offset="0" stop-color="#9cd0f8"/><stop offset=".5" stop-color="#4a98e0"/><stop offset="1" stop-color="#8ac4f0"/></linearGradient></defs><rect x=".5" y=".5" width="10" height="9" rx="2" fill="url(#cbu9)" stroke="#3a6ea8" stroke-width="1"/><path d="M2 4.5h7" stroke="#e8f4ff" stroke-width="1"/></svg>
<div class="a" style="left:254px;top:349.80px;width:673px;height:14.83px;background:#ffffff;border-top:1px solid #e8ebf2"></div>
<svg class="a" style="left:719px;top:352.30px" width="11" height="10"><defs><linearGradient id="cbu10" x1="0" y1="0" x2="0" y2="1"><stop offset="0" stop-color="#9cd0f8"/><stop offset=".5" stop-color="#4a98e0"/><stop offset="1" stop-color="#8ac4f0"/></linearGradient></defs><rect x=".5" y=".5" width="10" height="9" rx="2" fill="url(#cbu10)" stroke="#3a6ea8" stroke-width="1"/><path d="M2 4.5h7" stroke="#e8f4ff" stroke-width="1"/></svg>
<div class="a" style="left:254px;top:364.63px;width:673px;height:14.83px;background:#f4f6fb;border-top:1px solid #e8ebf2"></div>
<svg class="a" style="left:719px;top:367.13px" width="11" height="10"><defs><linearGradient id="cbu11" x1="0" y1="0" x2="0" y2="1"><stop offset="0" stop-color="#9cd0f8"/><stop offset=".5" stop-color="#4a98e0"/><stop offset="1" stop-color="#8ac4f0"/></linearGradient></defs><rect x=".5" y=".5" width="10" height="9" rx="2" fill="url(#cbu11)" stroke="#3a6ea8" stroke-width="1"/><path d="M2 4.5h7" stroke="#e8f4ff" stroke-width="1"/></svg>
<div class="a" style="left:388.5px;top:202px;width:1px;height:177px;background:#e2e6ee"></div>
<div class="a" style="left:523.0px;top:202px;width:1px;height:177px;background:#e2e6ee"></div>
<div class="a" style="left:657.5px;top:202px;width:1px;height:177px;background:#e2e6ee"></div>
<div class="a" style="left:792.0px;top:202px;width:1px;height:177px;background:#e2e6ee"></div>
<div class="a" style="left:254px;top:379px;width:673px;height:1px;background:#e2e6ee"></div>
<div class="a" style="left:656px;top:415px;width:81px;height:16px;border-radius:8.0px;border:1px solid #7a8a9c;background:linear-gradient(#eef4fa 0,#d4e0ec 45%,#aabccc 55%,#c8d6e4 100%);box-shadow:inset 0 1px 0 #fff"></div><div class="a t" style="left:656px;top:418.3px;width:81px;text-align:center;color:#1a1a1a;padding-left:18px">Add</div>
<div class="a" style="left:747px;top:415px;width:81px;height:16px;border-radius:8.0px;border:1px solid #7a8a9c;background:linear-gradient(#eef4fa 0,#d4e0ec 45%,#aabccc 55%,#c8d6e4 100%);box-shadow:inset 0 1px 0 #fff"></div><svg class="a" style="left:772px;top:419px" width="10" height="11"><rect x="0" y="1" width="4" height="9" rx="1" fill="#7ab0e0"/><rect x="5" y="1" width="4" height="9" rx="1" fill="#7ab0e0"/><path d="M2 1v9M7 1v9" stroke="#dff" stroke-width=".8"/></svg><div class="a t" style="left:747px;top:418.3px;width:81px;text-align:center;color:#1a1a1a;padding-left:18px">Edit</div>
<div class="a" style="left:838px;top:415px;width:82px;height:16px;border-radius:8.0px;border:1px solid #7a8a9c;background:linear-gradient(#eef4fa 0,#d4e0ec 45%,#aabccc 55%,#c8d6e4 100%);box-shadow:inset 0 1px 0 #fff"></div><svg class="a" style="left:862px;top:418px" width="13" height="12"><path d="M2 2l9 8M11 2l-9 8" stroke="#e02020" stroke-width="3.4"/></svg><div class="a t" style="left:838px;top:418.3px;width:82px;text-align:center;color:#1a1a1a;padding-left:18px">Del</div>
<div class="a" style="left:55px;top:438px;width:872px;height:7px;background:linear-gradient(#c6c6c6 0,#c6c6c6 1px,#dadada 1px,#e2e2e2 100%)"></div>
<div class="a" style="left:55px;top:445px;width:872px;height:110px;background:#e8eefe"></div>
<div class="a t" style="left:57.5px;top:448px;color:#222">Print Job Name: Juego-05_diatap.HRtmp_101_1_</div>
<div class="a t" style="left:57.5px;top:472px;color:#222">Start Time: 2020/09/11 03:12:16</div>
<div class="a t" style="left:57.5px;top:484px;color:#222">End Time: 2020/09/11 03:12:20</div>
<div class="a t" style="left:57.5px;top:507px;color:#222">Process Time: 00:00:03</div>
<div class="a t" style="left:57.5px;top:519px;color:#222">System Start Time:2020/09/11 15:57:54</div>
<div class="a t" style="left:57.5px;top:531px;color:#222">System Start Time:2020/09/11 16:01:07</div>
<div class="a" style="left:913px;top:445px;width:14px;height:110px;background:#dfe5f0;border-left:1px solid #b0bcd0"></div>
<div class="a" style="left:914px;top:446px;width:13px;height:10px;background:linear-gradient(90deg,#f4f6fa,#d4dae4)"></div>
<svg class="a" style="left:916px;top:448px" width="8" height="6"><path d="M1 5l3-3.5L7 5" fill="#9ab"/></svg>
<div class="a" style="left:914px;top:533px;width:13px;height:11px;background:linear-gradient(90deg,#c8e0f6,#8ec0ec)"></div>
<div class="a" style="left:914px;top:544px;width:13px;height:11px;background:linear-gradient(90deg,#f0f3f8,#d0d8e4)"></div>
<svg class="a" style="left:916px;top:547px" width="8" height="6"><path d="M1 1l3 3.5L7 1" fill="#9ab"/></svg>
<div class="a" style="left:55px;top:555px;width:872px;height:14px;background:#dcd9dc;border-top:1px solid #a9a5a9"></div>
<div class="a t" style="left:57px;top:557px;color:#222">System startup successfully</div>
<div class="a t" style="left:694px;top:557px;color:#222">space:455017MB</div>
<div class="a" style="left:55px;top:569px;width:874px;height:1px;background:#f8f8f8"></div>
<!-- DIALOG -->
<div class="a" style="left:297px;top:315px;width:396px;height:294px;border-radius:6px 6px 3px 3px;background:linear-gradient(90deg,#a9c9ec 0,#bcd6f2 3%,#c8def6 40%,#d8e8fa 55%,#c0d8f2 75%,#b4d0ee 100%);mix-blend-mode:multiply"></div>
<div class="a" style="left:298px;top:316px;width:394px;height:20px;border-radius:5px 5px 0 0;background:linear-gradient(90deg,rgba(200,224,248,.8) 0,rgba(206,228,250,.8) 30%,rgba(190,216,244,.8) 50%,rgba(215,234,252,.8) 62%,rgba(196,220,246,.8) 100%)"></div>
<div class="a" style="left:297px;top:315px;width:396px;height:294px;border:1px solid #848c96;border-radius:6px 6px 3px 3px;box-shadow:inset 0 0 0 1px rgba(255,255,255,.2)"></div>
<div class="a" style="left:296px;top:314px;width:398px;height:296px;border:1px solid rgba(190,190,190,.35);border-radius:7px 7px 4px 4px"></div>
<div class="a" style="left:686px;top:330px;width:6px;height:245px;background:linear-gradient(90deg,rgba(225,238,250,.4),rgba(200,222,244,.25))"></div>
<div class="a" style="left:298px;top:336px;width:5px;height:239px;background:rgba(225,238,250,.3)"></div>
<div class="a t" style="left:304px;top:320px;color:#1e2a3a;font-size:10px;letter-spacing:0.3px">Edit</div>
<div class="a" style="left:646px;top:315px;width:41px;height:15px;border:1px solid #6a3a34;border-top:none;border-radius:0 0 4px 4px;background:linear-gradient(#e8a090 0,#d46a58 40%,#c03820 55%,#d05a40 100%)"></div>
<svg class="a" style="left:661px;top:317px" width="11" height="10"><path d="M2 1.5l7 7M9 1.5l-7 7" stroke="#4a2020" stroke-width="3"/><path d="M2 1.5l7 7M9 1.5l-7 7" stroke="#fff" stroke-width="1.8"/></svg>
<div class="a" style="left:303px;top:336px;width:383px;height:268px;background:#e0dce1;border:1px solid #6e7078;border-bottom-color:#2a2c30;border-right-color:#5a5c62"></div>
<div class="a" style="left:304px;top:337px;width:381px;height:3px;background:linear-gradient(#d2ced3,#e0dce1)"></div>
<div class="a t" style="left:313px;top:347.5px;color:#222;letter-spacing:0.37px">Input Folder</div>
<div class="a t" style="left:313px;top:393.6px;color:#222;letter-spacing:0.37px">Finished file is</div>
<div class="a t" style="left:313px;top:417.6px;color:#222;letter-spacing:0.37px">Finish Folder</div>
<div class="a t" style="left:313px;top:445.6px;color:#222;letter-spacing:0.37px">Error file is</div>
<div class="a t" style="left:313px;top:469.2px;color:#222;letter-spacing:0.37px">Error Folder</div>
<div class="a" style="left:389.5px;top:347.5px;width:197.5px;height:13.5px;background:#fff;border:1px solid #a8a6aa;border-radius:3px;box-shadow:inset 0 1px 1px rgba(0,0,0,.18)"></div><div class="a t" style="left:392.5px;top:349.0px;color:#1a1a1a;letter-spacing:0.25px">\ArkitexDirector\Softproof\ToRip\PdfMono</div>
<div class="a" style="left:597px;top:344px;width:81px;height:16px;border-radius:8px;border:1px solid #7a8a9c;background:linear-gradient(#eef4fa 0,#d4e0ec 45%,#aabccc 55%,#c8d6e4 100%);box-shadow:inset 0 1px 0 rgba(255,255,255,.8)"></div><svg class="a" style="left:612px;top:347px;opacity:1" width="13" height="11"><circle cx="5" cy="4.5" r="3.5" fill="#e0f0fc" stroke="#7aa0c8" stroke-width="1.4"/><path d="M7.5 7l4 3.5" stroke="#3a4ab0" stroke-width="2"/></svg><div class="a t" style="left:628px;top:346.5px;color:#1a1a1a;font-size:10px;letter-spacing:0.4px">Browse</div>
<div class="a" style="left:597px;top:414px;width:81px;height:16px;border-radius:8px;border:1px solid #a4a4a4;background:linear-gradient(#f0f0f0 0,#dcdcdc 45%,#bcbcbc 55%,#d4d4d4 100%);box-shadow:inset 0 1px 0 rgba(255,255,255,.8)"></div><svg class="a" style="left:612px;top:417px;opacity:.45" width="13" height="11"><circle cx="5" cy="4.5" r="3.5" fill="#e0f0fc" stroke="#7aa0c8" stroke-width="1.4"/><path d="M7.5 7l4 3.5" stroke="#3a4ab0" stroke-width="2"/></svg><div class="a t" style="left:628px;top:416.5px;color:#b4b4b4;font-size:10px;letter-spacing:0.4px;text-shadow:1px 1px 0 #f0f0f0">Browse</div>
<div class="a" style="left:597px;top:466px;width:81px;height:16px;border-radius:8px;border:1px solid #a4a4a4;background:linear-gradient(#f0f0f0 0,#dcdcdc 45%,#bcbcbc 55%,#d4d4d4 100%);box-shadow:inset 0 1px 0 rgba(255,255,255,.8)"></div><svg class="a" style="left:612px;top:469px;opacity:.45" width="13" height="11"><circle cx="5" cy="4.5" r="3.5" fill="#e0f0fc" stroke="#7aa0c8" stroke-width="1.4"/><path d="M7.5 7l4 3.5" stroke="#3a4ab0" stroke-width="2"/></svg><div class="a t" style="left:628px;top:468.5px;color:#b4b4b4;font-size:10px;letter-spacing:0.4px;text-shadow:1px 1px 0 #f0f0f0">Browse</div>
<svg class="a" style="left:487px;top:367px" width="11" height="10"><defs><linearGradient id="cbd" x1="0" y1="0" x2="0" y2="1"><stop offset="0" stop-color="#9cd0f8"/><stop offset=".5" stop-color="#4a98e0"/><stop offset="1" stop-color="#8ac4f0"/></linearGradient></defs><rect x=".5" y=".5" width="10" height="9" rx="2" fill="url(#cbd)" stroke="#3a6ea8" stroke-width="1"/><path d="M2 4.5h7" stroke="#e8f4ff" stroke-width="1"/></svg>
<div class="a t" style="left:502px;top:366.3px;color:#222;letter-spacing:0.37px">Include Subfolder</div>
<div class="a" style="left:389.5px;top:390.5px;width:197.5px;height:15px;background:#fff;border:1px solid #aaa8ac;border-radius:3px;box-shadow:inset 0 1px 1px rgba(0,0,0,.15)"></div><div class="a t" style="left:392.5px;top:392.5px;color:#1a1a1a">Deleted</div><div class="a" style="left:570.5px;top:393.5px;width:15px;height:11px;background:linear-gradient(#f4f4f4,#d0d0d0);border:1px solid #8a8a8a"></div><svg class="a" style="left:574.5px;top:396.5px" width="8" height="6"><path d="M1 1l3 3 3-3" fill="none" stroke="#222" stroke-width="1.8"/></svg>
<div class="a" style="left:389.5px;top:442px;width:197.5px;height:15px;background:#fff;border:1px solid #aaa8ac;border-radius:3px;box-shadow:inset 0 1px 1px rgba(0,0,0,.15)"></div><div class="a t" style="left:392.5px;top:444px;color:#1a1a1a">Deleted</div><div class="a" style="left:570.5px;top:445px;width:15px;height:11px;background:linear-gradient(#f4f4f4,#d0d0d0);border:1px solid #8a8a8a"></div><svg class="a" style="left:574.5px;top:448px" width="8" height="6"><path d="M1 1l3 3 3-3" fill="none" stroke="#222" stroke-width="1.8"/></svg>
<div class="a" style="left:389.5px;top:416px;width:197.5px;height:14.5px;background:linear-gradient(#c8c6ca,#d6d4d8 40%,#dad8dc);border:1px solid #a8a6aa;border-radius:3px;box-shadow:inset 0 1px 1px rgba(0,0,0,.18)"></div>
<div class="a" style="left:389.5px;top:468.5px;width:197.5px;height:15px;background:linear-gradient(#c8c6ca,#d6d4d8 40%,#dad8dc);border:1px solid #a8a6aa;border-radius:3px;box-shadow:inset 0 1px 1px rgba(0,0,0,.18)"></div>
<div class="a" style="left:311px;top:505px;width:367px;height:46px;border:1px solid #c8cad0;border-radius:2px;background:rgba(235,233,238,.5)"></div>
<div class="a" style="left:314px;top:500px;width:40px;height:8px;background:#e0dce1"></div>
<div class="a t" style="left:316px;top:498.5px;color:#8a8a8a;font-size:9px;letter-spacing:0.2px">File type</div>
<svg class="a" style="left:320.5px;top:517.5px" width="12" height="10"><defs><linearGradient id="cbg320.5517.5" x1="0" y1="0" x2="0" y2="1"><stop offset="0" stop-color="#e8e8e8"/><stop offset=".5" stop-color="#b4b4b4"/><stop offset="1" stop-color="#d8d8d8"/></linearGradient></defs><rect x=".5" y=".5" width="11" height="9" rx="2" fill="url(#cbg320.5517.5)" stroke="#6a6a6a" stroke-width="1"/><path d="M2.5 4.5l2.5 3 5-6.5" fill="none" stroke="#111" stroke-width="1.9"/></svg>
<div class="a t" style="left:335.5px;top:516.5px;color:#b4b2b6;text-shadow:1px 1px 0 #f4f4f6">PS Files</div>
<svg class="a" style="left:390px;top:517.5px" width="12" height="10"><defs><linearGradient id="cbg390517.5" x1="0" y1="0" x2="0" y2="1"><stop offset="0" stop-color="#e8e8e8"/><stop offset=".5" stop-color="#b4b4b4"/><stop offset="1" stop-color="#d8d8d8"/></linearGradient></defs><rect x=".5" y=".5" width="11" height="9" rx="2" fill="url(#cbg390517.5)" stroke="#6a6a6a" stroke-width="1"/><path d="M2.5 4.5l2.5 3 5-6.5" fill="none" stroke="#111" stroke-width="1.9"/></svg>
<div class="a t" style="left:405px;top:516.5px;color:#b4b2b6;text-shadow:1px 1px 0 #f4f4f6">EPS Files</div>
<svg class="a" style="left:536px;top:517.5px" width="12" height="10"><defs><linearGradient id="cbg536517.5" x1="0" y1="0" x2="0" y2="1"><stop offset="0" stop-color="#e8e8e8"/><stop offset=".5" stop-color="#b4b4b4"/><stop offset="1" stop-color="#d8d8d8"/></linearGradient></defs><rect x=".5" y=".5" width="11" height="9" rx="2" fill="url(#cbg536517.5)" stroke="#6a6a6a" stroke-width="1"/><path d="M2.5 4.5l2.5 3 5-6.5" fill="none" stroke="#111" stroke-width="1.9"/></svg>
<div class="a t" style="left:551px;top:516.5px;color:#b4b2b6;text-shadow:1px 1px 0 #f4f4f6">PDF Files</div>
<svg class="a" style="left:605px;top:517.5px" width="12" height="10"><defs><linearGradient id="cbg605517.5" x1="0" y1="0" x2="0" y2="1"><stop offset="0" stop-color="#e8e8e8"/><stop offset=".5" stop-color="#b4b4b4"/><stop offset="1" stop-color="#d8d8d8"/></linearGradient></defs><rect x=".5" y=".5" width="11" height="9" rx="2" fill="url(#cbg605517.5)" stroke="#6a6a6a" stroke-width="1"/><path d="M2.5 4.5l2.5 3 5-6.5" fill="none" stroke="#111" stroke-width="1.9"/></svg>
<div class="a t" style="left:620px;top:516.5px;color:#b4b2b6;text-shadow:1px 1px 0 #f4f4f6">PRN Files</div>
<svg class="a" style="left:320.5px;top:535.5px" width="12" height="10"><defs><linearGradient id="cbg320.5535.5" x1="0" y1="0" x2="0" y2="1"><stop offset="0" stop-color="#e8e8e8"/><stop offset=".5" stop-color="#b4b4b4"/><stop offset="1" stop-color="#d8d8d8"/></linearGradient></defs><rect x=".5" y=".5" width="11" height="9" rx="2" fill="url(#cbg320.5535.5)" stroke="#6a6a6a" stroke-width="1"/><path d="M2.5 4.5l2.5 3 5-6.5" fill="none" stroke="#111" stroke-width="1.9"/></svg>
<div class="a t" style="left:335.5px;top:534.5px;color:#b4b2b6;text-shadow:1px 1px 0 #f4f4f6">TIFF Files</div>
<svg class="a" style="left:390px;top:535.5px" width="12" height="10"><defs><linearGradient id="cbb390535.5" x1="0" y1="0" x2="0" y2="1"><stop offset="0" stop-color="#b8e0fc"/><stop offset=".5" stop-color="#5aa8ec"/><stop offset="1" stop-color="#a8d8fa"/></linearGradient></defs><rect x=".5" y=".5" width="11" height="9" rx="2" fill="url(#cbb390535.5)" stroke="#3a5a88" stroke-width="1"/><path d="M2.5 4.5l2.5 3 5-6.5" fill="none" stroke="#0a1830" stroke-width="1.9"/></svg>
<div class="a t" style="left:405px;top:534.5px;color:#111">1-Bit TIFF Without Ripping</div>
<svg class="a" style="left:536px;top:535.5px" width="12" height="10"><defs><linearGradient id="cbg536535.5" x1="0" y1="0" x2="0" y2="1"><stop offset="0" stop-color="#e8e8e8"/><stop offset=".5" stop-color="#b4b4b4"/><stop offset="1" stop-color="#d8d8d8"/></linearGradient></defs><rect x=".5" y=".5" width="11" height="9" rx="2" fill="url(#cbg536535.5)" stroke="#6a6a6a" stroke-width="1"/><path d="M2.5 4.5l2.5 3 5-6.5" fill="none" stroke="#111" stroke-width="1.9"/></svg>
<div class="a t" style="left:551px;top:534.5px;color:#b4b2b6;text-shadow:1px 1px 0 #f4f4f6">JPG Files</div>
<svg class="a" style="left:605px;top:535.5px" width="12" height="10"><defs><linearGradient id="cbb605535.5" x1="0" y1="0" x2="0" y2="1"><stop offset="0" stop-color="#b8e0fc"/><stop offset=".5" stop-color="#5aa8ec"/><stop offset="1" stop-color="#a8d8fa"/></linearGradient></defs><rect x=".5" y=".5" width="11" height="9" rx="2" fill="url(#cbb605535.5)" stroke="#3a5a88" stroke-width="1"/><path d="M2.5 4.5l2.5 3 5-6.5" fill="none" stroke="#0a1830" stroke-width="1.9"/></svg>
<div class="a t" style="left:620px;top:534.5px;color:#111">All Files</div>
<div class="a" style="left:389px;top:579px;width:81px;height:15px;border-radius:7.5px;border:1px solid #7a8a9c;background:linear-gradient(#eef4fa 0,#d4e0ec 45%,#aabccc 55%,#c8d6e4 100%);box-shadow:inset 0 1px 0 #fff"></div><svg class="a" style="left:414px;top:580px" width="15" height="13"><path d="M1.5 7l4 4 8-9" fill="none" stroke="#2a9a2a" stroke-width="3"/><path d="M2 7l3.5 3.5 7.5-8.5" fill="none" stroke="#7ad86a" stroke-width="1.2"/></svg><div class="a t" style="left:389px;top:581.5px;width:81px;text-align:center;color:#1a1a1a;padding-left:19px">OK</div>
<div class="a" style="left:519px;top:579px;width:81px;height:15px;border-radius:7.5px;border:1px solid #7a8a9c;background:linear-gradient(#eef4fa 0,#d4e0ec 45%,#aabccc 55%,#c8d6e4 100%);box-shadow:inset 0 1px 0 #fff"></div><svg class="a" style="left:535px;top:580px" width="13" height="13"><circle cx="6.5" cy="6.5" r="5" fill="#fff" stroke="#c8141e" stroke-width="2.4"/><path d="M3 3l7 7" stroke="#c8141e" stroke-width="2.4"/></svg><div class="a t" style="left:519px;top:581.5px;width:81px;text-align:center;color:#1a1a1a;padding-left:19px">Cancel</div>
<!-- ARROWS -->
<svg class="a" style="left:0;top:0" width="1159" height="787" viewBox="0 0 1159 787"><g fill="#e21a1a" stroke="#e21a1a" stroke-width="1.2" stroke-linejoin="round"><polygon points="84.0,169.9 77.8,173.9 66.7,190.8 66.2,195.2 71.6,197.5 79.1,190.8 77.8,216.6 77.3,227.3 81.4,231.7 85.8,229.1 87.1,218.4 87.6,194.4 89.4,199.3 93.8,199.7 96.5,195.2 94.7,187.2 88.5,173.9"/><polygon points="180.1,337.9 181.6,333.2 190.2,329.3 202.6,326.6 209.6,327.4 211.9,330.1 210.4,333.6 203.4,335.9 220.5,335.5 232.1,334.4 239.9,332.4 248.4,332.8 251.9,335.9 250.0,340.2 239.9,342.5 232.1,342.9 223.6,344.8 202.6,344.8 204.2,349.5 204.2,353.4 201.1,355.7 195.6,354.2 185.5,346.4 180.9,342.5"/><polygon points="377.0,255.7 381.6,255.1 383.9,258.6 382.7,263.7 378.2,268.9 371.9,275.2 375.9,278.0 376.7,282.0 374.7,284.9 367.9,285.4 359.3,283.7 353.6,280.3 353.0,275.7 356.4,272.9 357.3,265.4 361.0,263.7 364.4,264.9 367.3,267.2 370.7,263.7 374.7,258.6"/><polygon points="338.9,356.2 342.4,356.9 346.6,363.2 350.8,370.2 353.6,376.5 352.9,380.7 349.4,381.4 344.5,377.9 343.1,384.2 342.4,394.0 340.3,397.4 336.8,397.4 334.7,392.6 335.0,378.6 331.2,377.2 328.4,374.4 328.4,368.1 333.3,360.4 336.1,356.9"/><polygon points="617.7,551.4 623.4,548.3 638.0,548.9 643.1,552.1 643.7,556.5 640.6,559.0 637.4,559.7 644.4,568.6 648.8,575.6 648.8,579.4 645.6,581.9 641.8,580.6 634.8,572.4 631.7,568.6 629.1,571.7 624.0,572.4 620.9,569.2 618.3,561.0"/></g></svg>
</body></html>
